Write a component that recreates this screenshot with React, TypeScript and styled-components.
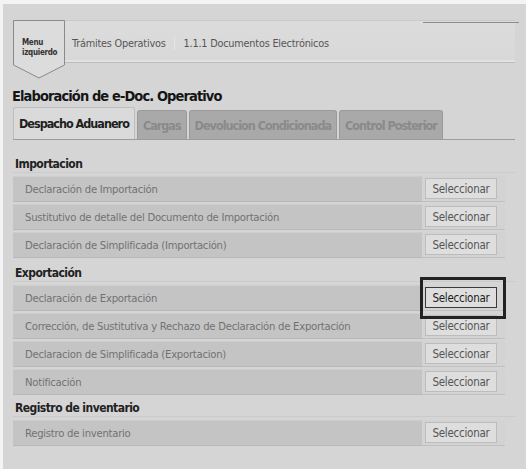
import React, { FunctionComponent } from 'react';
import styled, { createGlobalStyle } from 'styled-components';

const GlobalStyle = createGlobalStyle`
  html, body {
    margin: 0;
    padding: 0;
    background: #f4f4f4;
  }
  body {
    font-family: "DejaVu Sans Condensed", "Liberation Sans Narrow", "DejaVu Sans", sans-serif;
  }
`;

const Page = styled.div`
  margin: 4px 0 0 3px;
  min-height: 465px;
  background: #d5d5d5;
  padding: 16px 11px 0 10px;
  box-sizing: border-box;
`;

const Header = styled.div`
  display: flex;
  align-items: flex-start;
  height: 43px;
`;

const MenuTab = styled.div`
  position: relative;
  width: 52px;
  height: 59px;
  flex: none;
  z-index: 1;
`;

const MenuShape = styled.svg`
  position: absolute;
  inset: 0;
`;

const MenuLabel = styled.div`
  position: relative;
  padding: 18px 0 0 9px;
  font-size: 8px;
  font-weight: bold;
  line-height: 10px;
  color: #333;
  letter-spacing: -0.3px;
`;

const Crumbs = styled.div`
  flex: 1;
  height: 43px;
  display: flex;
  align-items: center;
  padding-top: 4px;
  box-sizing: border-box;
  border-top: 1px solid #c9c9c9;
  border-bottom: 1px solid #bdbdbd;
  box-shadow: inset 0 -2px 0 #e2e2e2;
  background: linear-gradient(#dcdcdc, #d8d8d8);
  position: relative;
`;

const TopRule = styled.div`
  position: absolute;
  right: -4px;
  top: 1px;
  width: 96px;
  height: 1px;
  background: #8c8c8c;
`;

const Crumb = styled.span`
  font-size: 10.8px;
  color: #555;
  padding: 0 8px 0 7px;
  letter-spacing: -0.2px;
  & + & {
    border-left: 1px solid #e6e6e6;
    padding-left: 9px;
  }
`;

const Title = styled.h1`
  margin: 23px 0 0 -1px;
  font-size: 14.5px;
  font-weight: bold;
  letter-spacing: -0.9px;
  color: #151515;
  line-height: 20px;
`;

const TabBar = styled.div`
  display: flex;
  align-items: flex-end;
  gap: 2px;
  margin-top: 1px;
  height: 32px;
  border-bottom: 1px solid #9c9c9c;
`;

const Tab = styled.div<{ $active?: boolean }>`
  height: ${(p) => (p.$active ? 32 : 29)}px;
  display: flex;
  align-items: center;
  box-sizing: border-box;
  padding: 0 5px;
  font-size: 12.5px;
  font-weight: bold;
  letter-spacing: -1px;
  border: 1px solid ${(p) => (p.$active ? '#bdbdbd' : '#9a9a9a')};
  border-bottom: none;
  border-radius: 3px 3px 0 0;
  background: ${(p) => (p.$active ? '#dadada' : '#a9a9a9')};
  color: ${(p) => (p.$active ? '#1e1e1e' : '#8a8a8a')};
`;

const Section = styled.div<{ $gap: number }>`
  margin-top: ${(p) => p.$gap}px;
`;

const SectionTitle = styled.div`
  font-size: 12px;
  font-weight: bold;
  color: #222;
  padding-left: 2px;
  letter-spacing: -0.55px;
  height: 18px;
  line-height: 20px;
  border-bottom: 1px solid #cacaca;
  margin-bottom: 3px;
`;

const RowList = styled.div`
  display: flex;
  flex-direction: column;
  gap: 2px;
  margin-right: 10px;
`;

const Row = styled.div`
  display: flex;
  height: 26px;
`;

const Label = styled.div`
  flex: 1;
  display: flex;
  align-items: center;
  padding-left: 12px;
  background: #c4c4c4;
  border-top: 1px solid #cdcdcd;
  border-bottom: 1px solid #b8b8b8;
  font-size: 11.2px;
  color: #727272;
  letter-spacing: -0.25px;
`;

const Action = styled.div`
  position: relative;
  width: 83px;
  display: flex;
  align-items: center;
  padding-left: 3px;
  background: #d3d3d3;
  border-bottom: 1px solid #c0c0c0;
  box-sizing: border-box;
`;

const Button = styled.button<{ $focus?: boolean }>`
  width: 72px;
  height: 21px;
  padding: 0;
  font-family: inherit;
  font-size: 11.5px;
  letter-spacing: -0.25px;
  background: #dedede;
  border: 1px solid ${(p) => (p.$focus ? '#3a3a3a' : '#bcbcbc')};
  color: ${(p) => (p.$focus ? '#1c1c1c' : '#555')};
`;

const Highlight = styled.div`
  position: absolute;
  left: -2px;
  top: -8px;
  width: 86px;
  height: 42px;
  box-sizing: border-box;
  border: 3px solid #222;
  pointer-events: none;
  z-index: 2;
`;

interface IItem {
  label: string;
  focus?: boolean;
}

interface IGroup {
  title: string;
  gap: number;
  items: IItem[];
}

const groups: IGroup[] = [
  {
    title: 'Importacion',
    gap: 14,
    items: [
      { label: 'Declaración de Importación' },
      { label: 'Sustitutivo de detalle del Documento de Importación' },
      { label: 'Declaración de Simplificada (Importación)' },
    ],
  },
  {
    title: 'Exportación',
    gap: 5,
    items: [
      { label: 'Declaración de Exportación', focus: true },
      { label: 'Corrección, de Sustitutiva y Rechazo de Declaración de Exportación' },
      { label: 'Declaracion de Simplificada (Exportacion)' },
      { label: 'Notificación' },
    ],
  },
  {
    title: 'Registro de inventario',
    gap: 3,
    items: [{ label: 'Registro de inventario' }],
  },
];

const tabs = ['Despacho Aduanero', 'Cargas', 'Devolucion Condicionada', 'Control Posterior'];

const App: FunctionComponent = () => {
  return (
    <>
      <GlobalStyle />
      <Page>
        <Header>
          <MenuTab>
            <MenuShape width="52" height="59" viewBox="0 0 52 59">
              <path d="M0.5 0.5 H51.5 V45 L26 58 L0.5 45 Z" fill="#dcdcdc" stroke="#8a8a8a" />
            </MenuShape>
            <MenuLabel>
              Menu
              <br />
              izquierdo
            </MenuLabel>
          </MenuTab>
          <Crumbs>
            <TopRule />
            <Crumb>Trámites Operativos</Crumb>
            <Crumb>1.1.1 Documentos Electrónicos</Crumb>
          </Crumbs>
        </Header>
        <Title>Elaboración de e-Doc. Operativo</Title>
        <TabBar>
          {tabs.map((t, i) => (
            <Tab key={t} $active={i === 0}>
              {t}
            </Tab>
          ))}
        </TabBar>
        {groups.map((g) => (
          <Section key={g.title} $gap={g.gap}>
            <SectionTitle>{g.title}</SectionTitle>
            <RowList>
              {g.items.map((item) => (
                <Row key={item.label}>
                  <Label>{item.label}</Label>
                  <Action>
                    <Button $focus={item.focus}>Seleccionar</Button>
                    {item.focus && <Highlight />}
                  </Action>
                </Row>
              ))}
            </RowList>
          </Section>
        ))}
      </Page>
    </>
  );
};

export default App;
